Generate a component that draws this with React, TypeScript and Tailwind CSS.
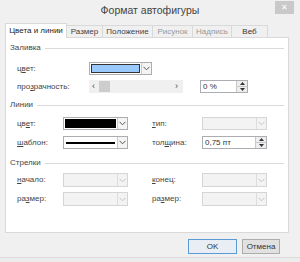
import React from 'react';

const Chevron = ({ disabled }: { disabled?: boolean }) => (
  <svg width="7" height="5" viewBox="0 0 7 5">
    <polyline
      points="0.5,0.8 3.5,3.8 6.5,0.8"
      fill="none"
      stroke={disabled ? '#c4c4c4' : '#555'}
      strokeWidth="1"
    />
  </svg>
);

function Combo({
  width,
  height = 13,
  disabled,
  children,
}: {
  width: number;
  height?: number;
  disabled?: boolean;
  children?: React.ReactNode;
}) {
  return (
    <div
      className={`flex shrink-0 border ${disabled ? 'border-[#d5d5d5] bg-[#f3f3f3]' : 'border-[#abadb3] bg-white'}`}
      style={{ width, height }}
    >
      <div className="flex flex-1 items-center p-px">{children}</div>
      <div
        className={`flex w-[10px] items-center justify-center border-l ${disabled ? 'border-[#dcdcdc]' : 'border-[#c8c8c8] bg-[#f4f4f4]'}`}
      >
        <Chevron disabled={disabled} />
      </div>
    </div>
  );
}

function Spinner({ value, width }: { value: string; width: number }) {
  return (
    <div className="flex h-[13px] shrink-0 border border-[#abadb3] bg-white" style={{ width }}>
      <div className="flex flex-1 items-center pl-[2px] text-[8px] text-[#333]">{value}</div>
      <div className="flex w-[11px] flex-col border-l border-[#c8c8c8] bg-[#eeeeee]">
        <div className="flex flex-1 items-center justify-center border-b border-[#c8c8c8]">
          <svg width="5" height="3" viewBox="0 0 5 3">
            <polygon points="0,3 2.5,0 5,3" fill="#333" />
          </svg>
        </div>
        <div className="flex flex-1 items-center justify-center">
          <svg width="5" height="3" viewBox="0 0 5 3">
            <polygon points="0,0 2.5,3 5,0" fill="#333" />
          </svg>
        </div>
      </div>
    </div>
  );
}

function Heading({ title }: { title: string }) {
  return (
    <div className="flex h-[12px] items-center pl-[4px] pr-[4px] text-[8px] text-[#444]">
      <span>{title}</span>
      <div className="ml-[4px] h-px flex-1 bg-[#dadada]" />
    </div>
  );
}

function Label({ text, u, width }: { text: string; u: number; width: number }) {
  return (
    <div className="shrink-0 whitespace-nowrap text-[8px] text-[#444]" style={{ width }}>
      {text.slice(0, u)}
      <span className="underline">{text[u]}</span>
      {text.slice(u + 1)}
    </div>
  );
}

const tabs = [
  { name: 'Цвета и линии', w: 62, active: true, color: 'text-[#222]' },
  { name: 'Размер', w: 36, color: 'text-[#444]' },
  { name: 'Положение', w: 50, color: 'text-[#444]' },
  { name: 'Рисунок', w: 40, color: 'text-[#999]' },
  { name: 'Надпись', w: 39, color: 'text-[#999]' },
  { name: 'Веб', w: 36, color: 'text-[#333]' },
];

export default function App() {
  return (
    <div className="relative h-[262px] w-[300px] overflow-hidden bg-[#f0f0f0] font-['Liberation_Sans',sans-serif]">
      {/* title bar */}
      <div className="flex h-[24px] items-center justify-center pb-[3px] text-[10.5px] text-[#444]">
        Формат автофигуры
      </div>
      <div className="absolute right-[6px] top-[1px] flex h-[13px] w-[19px] items-center justify-center bg-[#c9c9c9] text-[8px] text-white">
        ✕
      </div>

      {/* tabs */}
      <div className="flex h-[13px] items-end pl-[5px]">
        {tabs.map((t) => (
          <div
            key={t.name}
            className={`flex items-center justify-center whitespace-nowrap text-[8px] ${t.color} ${
              t.active
                ? 'relative z-10 -mb-px h-[15px] border border-b-0 border-[#d9d9d9] bg-white'
                : 'h-[12px] border-t border-r border-[#d9d9d9] bg-[#f0f0f0]'
            }`}
            style={{ width: t.w }}
          >
            {t.name}
          </div>
        ))}
      </div>

      {/* panel */}
      <div className="ml-[5px] h-[196px] w-[284px] border border-[#d9d9d9] bg-white">
        <div className="mt-[4px]">
          <Heading title="Заливка" />
        </div>
        <div className="mt-[8px] flex h-[13px] items-center pl-[11px]">
          <Label text="цвет:" u={1} width={72} />
          <Combo width={63}>
            <div className="h-full w-full border border-[#333] bg-[#99c9ff]" />
          </Combo>
        </div>
        <div className="mt-[5px] flex h-[13px] items-center pl-[11px]">
          <Label text="прозрачность:" u={3} width={72} />
          <div className="flex h-[13px] w-[94px] items-center bg-[#f0f0f0] text-[9px] text-[#444]">
            <span className="w-[10px] pl-[3px]">‹</span>
            <div className="h-[11px] w-[11px] bg-[#cdcdcd]" />
            <div className="flex-1" />
            <span className="w-[8px]">›</span>
          </div>
          <div className="w-[17px]" />
          <Spinner value="0 %" width={48} />
        </div>

        <div className="mt-[6px]">
          <Heading title="Линии" />
        </div>
        <div className="mt-[6px] flex h-[13px] items-center pl-[11px]">
          <Label text="цвет:" u={2} width={46} />
          <Combo width={65}>
            <div className="h-full w-full bg-black" />
          </Combo>
          <div className="w-[24px]" />
          <Label text="тип:" u={0} width={50} />
          <Combo width={65} disabled />
        </div>
        <div className="mt-[6px] flex h-[13px] items-center pl-[11px]">
          <Label text="шаблон:" u={0} width={46} />
          <Combo width={65}>
            <div className="mx-[1px] h-[2px] w-full bg-black" />
          </Combo>
          <div className="w-[24px]" />
          <Label text="толщина:" u={3} width={50} />
          <Spinner value="0,75 пт" width={65} />
        </div>

        <div className="mt-[8px]">
          <Heading title="Стрелки" />
        </div>
        <div className="mt-[4px] flex h-[14px] items-center pl-[11px]">
          <Label text="начало:" u={0} width={46} />
          <Combo width={65} height={14} disabled />
          <div className="w-[24px]" />
          <Label text="конец:" u={0} width={50} />
          <Combo width={65} height={14} disabled />
        </div>
        <div className="mt-[5px] flex h-[14px] items-center pl-[11px]">
          <Label text="размер:" u={2} width={46} />
          <Combo width={65} height={14} disabled />
          <div className="w-[24px]" />
          <Label text="размер:" u={2} width={50} />
          <Combo width={65} height={14} disabled />
        </div>
      </div>

      {/* buttons */}
      <div className="mt-[6px] flex justify-end gap-[5px] pr-[20px]">
        <button className="flex h-[15px] w-[49px] items-center justify-center border border-[#5b9bd5] bg-[#e9eef5] text-[8px] text-[#333]">
          OK
        </button>
        <button className="flex h-[15px] w-[38px] items-center justify-center border border-[#adadad] bg-[#e1e1e1] text-[8px] text-[#333]">
          Отмена
        </button>
      </div>
      <div className="mt-[3px] h-full border-t border-[#dadada] bg-[#ececec]" />
    </div>
  );
}
